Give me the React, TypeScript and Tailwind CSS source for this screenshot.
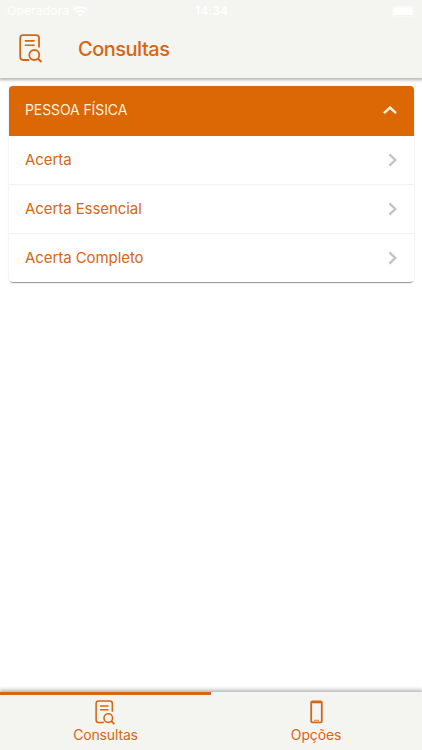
import React from 'react';

const QUERIES = ['Acerta', 'Acerta Essencial', 'Acerta Completo'];

const SearchDocIcon: React.FC<{ className: string }> = ({ className }) => (
  <svg viewBox="0 0 23 29" fill="none" stroke="currentColor" strokeWidth="1.8" className={className}>
    <path d="M20 13.5V4.1A2.9 2.9 0 0 0 17.1 1.2H4.1A2.9 2.9 0 0 0 1.2 4.1v19a2.9 2.9 0 0 0 2.9 2.9h6.2" />
    <path d="M5.8 6.9h9.8M5.8 11.3h9.8" strokeWidth="1.6" />
    <circle cx="15.3" cy="21" r="5" />
    <path d="m18.8 24.4 3.6 3.6" strokeWidth="2.1" />
  </svg>
);

const PhoneIcon: React.FC<{ className: string }> = ({ className }) => (
  <svg viewBox="0 0 13 24" fill="none" stroke="currentColor" className={className}>
    <rect x="1.2" y="1.4" width="10.6" height="21" rx="1.1" strokeWidth="1.8" />
    <path d="M1 2.3h11" strokeWidth="2" />
    <path d="M4 20.3h5" strokeWidth="1" strokeOpacity=".8" />
  </svg>
);

const StatusBar: React.FC = () => (
  <div className="grid h-[22px] grid-cols-3 items-center pr-[6px] pl-[7px] text-[12px] text-white">
    <div className="flex items-center gap-1">
      <span className="tracking-[0.2px]">Operadora</span>
      <svg viewBox="0 0 15 11" fill="currentColor" className="h-[11px] w-[15px]">
        <path d="M7.5 0C4.6 0 2 1.1 0 3l1.5 1.6a8.7 8.7 0 0 1 12 0L15 3a10.9 10.9 0 0 0-7.5-3Z" />
        <path d="M7.5 3.8c-1.9 0-3.6.7-4.9 1.9l1.5 1.6a5 5 0 0 1 6.8 0l1.5-1.6a7.2 7.2 0 0 0-4.9-1.9Z" />
        <path d="M7.5 7.4c-.9 0-1.8.4-2.4.9L7.5 11l2.4-2.7c-.6-.5-1.5-.9-2.4-.9Z" />
      </svg>
    </div>
    <span className="text-center font-semibold tracking-[0.1px]">14:34</span>
    <svg viewBox="0 0 24 11" fill="currentColor" className="h-[11px] w-6 justify-self-end">
      <rect x=".5" y=".5" width="21" height="10" rx="2.5" fill="none" stroke="currentColor" strokeOpacity=".4" />
      <rect x="1.5" y="1.5" width="19" height="7.5" rx="1" />
      <path d="M22.5 4v3c.8-.3 1-.8 1-1.5s-.2-1.2-1-1.5Z" opacity=".5" />
    </svg>
  </div>
);

export default function App() {
  return (
    <div className="flex h-[750px] w-[422px] flex-col bg-white font-['Inter',sans-serif] text-[#d46715]">
      <header className="h-[78px] bg-[#f4f4f0] shadow-[0_1px_3px_1px_rgba(0,0,0,0.3)]">
        <StatusBar />
        <div className="flex h-[54px] items-center pl-[19px]">
          <SearchDocIcon className="mb-px h-[29px] w-[23px]" />
          <h1 className="ml-9 text-[20px] leading-6 font-medium tracking-[-0.5px]">Consultas</h1>
        </div>
      </header>

      <main className="flex-1 px-2 pt-2">
        <section className="mx-[0.5px] overflow-hidden rounded-[4px] bg-white shadow-[0_2px_1px_-1px_rgba(0,0,0,0.4),0_0_2px_rgba(0,0,0,0.15)]">
          <div className="flex h-[50px] items-center justify-between bg-[#dc6705] pr-[17px] pb-[3px] pl-[16.5px] text-[#fff3dc]">
            <h2 className="text-[14px] tracking-[-0.1px]">PESSOA FÍSICA</h2>
            <svg viewBox="0 0 14 8" fill="none" stroke="currentColor" strokeWidth="2.4" className="mt-px h-2 w-[14px]">
              <path d="m1 7.1 6-5.6 6 5.6" />
            </svg>
          </div>
          <ul>
            {QUERIES.map((query) => (
              <li
                key={query}
                className="flex h-[49px] items-center justify-between border-b border-[#f1f1f1] pr-[17px] pl-4 last:h-12 last:border-b-0"
              >
                <span className="pl-[0.5px] text-[15px] tracking-[-0.07px]">{query}</span>
                <svg viewBox="0 0 9 14" fill="none" stroke="#c4c4c4" strokeWidth="2.4" className="h-[14px] w-[9px]">
                  <path d="M1.4 1.3 7.3 7l-5.9 5.7" />
                </svg>
              </li>
            ))}
          </ul>
        </section>
      </main>

      <nav className="grid h-[58px] grid-cols-2 bg-[#f4f4f0] text-[14px] leading-[18px] shadow-[0_-1px_4px_1px_rgba(0,0,0,0.3)]">
        <div className="flex flex-col items-center border-t-[3px] border-[#d46715] pt-[5px]">
          <SearchDocIcon className="mr-px h-[25px] w-5" />
          <span className="mt-px tracking-[-0.15px]">Consultas</span>
        </div>
        <div className="flex flex-col items-center pt-2">
          <PhoneIcon className="mr-px h-6 w-[13px]" />
          <span className="mt-0.5 mr-px tracking-[-0.15px]">Opções</span>
        </div>
      </nav>
    </div>
  );
}
